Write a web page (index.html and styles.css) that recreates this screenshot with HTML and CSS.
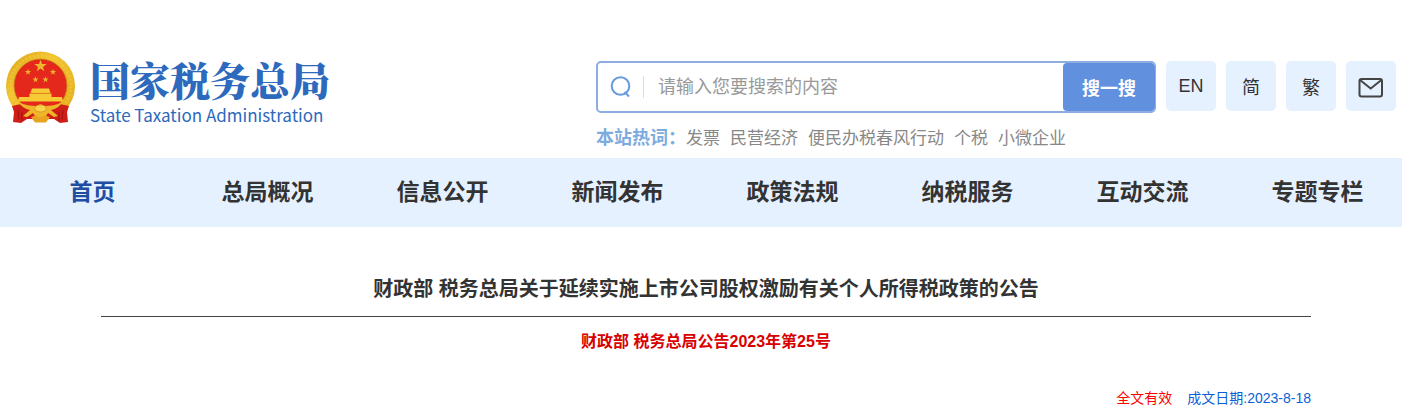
FILE: index.html
```html
<!DOCTYPE html>
<html lang="zh-CN">
<head>
<meta charset="utf-8">
<meta name="viewport" content="width=device-width, initial-scale=1">
<title>国家税务总局</title>
<link rel="stylesheet" href="styles.css">
</head>
<body>
<header class="header">
  <a class="brand" href="#">
    <svg class="emblem" viewBox="0 0 70 74" aria-hidden="true">
      <defs>
        <linearGradient id="gold" x1="0" y1="0" x2="1" y2="1">
          <stop offset="0" stop-color="#d9a01c"/>
          <stop offset=".35" stop-color="#f2c531"/>
          <stop offset="1" stop-color="#e3a91d"/>
        </linearGradient>
        <path id="star" d="M0-6.500 1.500-2 6.200-2 2.500.9 3.800 5.300 0 2.600-3.800 5.300-2.500.9-6.200-2-1.500-2Z"/>
      </defs>
      <circle cx="34.500" cy="35" r="34.500" fill="url(#gold)"/>
      <circle cx="34.500" cy="35" r="30.500" fill="none" stroke="#f8d64c" stroke-width="3" stroke-dasharray="2 2" opacity=".35"/>
      <circle cx="34.500" cy="34.500" r="26.500" fill="#e5281c" stroke="#c88a16" stroke-width=".7"/>
      <g fill="#efb62d">
        <use href="#star" transform="translate(34.500 15)"/>
        <use href="#star" transform="translate(22 21) scale(.5)"/>
        <use href="#star" transform="translate(47 21) scale(.5)"/>
        <use href="#star" transform="translate(29.500 28.500) scale(.5)"/>
        <use href="#star" transform="translate(39.500 28.500) scale(.5)"/>
      </g>
      <path d="M26 37.500h17l1.500 4.500h-20ZM23.500 42.500h22V46H56l1 4.500H12l1-4.500h10.500Z" fill="#f6ca35"/>
      <path d="M25 42.300h19" stroke="#db8f1d" stroke-width=".8"/>
      <path d="M6 55l9-2 12 6h15l12-6 9 2-2 6 1 10-8 1-6-4H21l-6 4-8-1 1-10Z" fill="#cf1d18"/>
      <path d="M12 59l1 10M16 61v9M57 59l-1 10M53 61v9" stroke="#a51211" stroke-width="1"/>
      <path d="M12 51c7 3 13 4 18 4l4.500-2 4.500 2c5 0 11-1 18-4-3 4-7 7-12 8l7 6-4 1-6-4c-2 4-5 5-7.500 5s-5.500-1-7.500-5l-6 4-4-1 7-6c-5-1-9-4-12-8Z" fill="#efb629"/>
      <ellipse cx="34.500" cy="57.500" rx="6" ry="3.500" fill="#f8d34b" stroke="#cf7d17" stroke-width=".6"/>
      <path d="M25 66l5-1.500q4.500 3 9 0l5 1.500-4 5.500h-11Z" fill="#e7a321"/>
    </svg>
    <span class="brand-text">
      <span class="brand-cn">国家税务总局</span>
      <span class="brand-en">State Taxation Administration</span>
    </span>
  </a>
  <div class="tools">
    <div class="tools-row">
      <form class="search" role="search">
        <svg class="search-icon" viewBox="0 0 22 22" aria-hidden="true">
          <circle cx="10.500" cy="10" r="8.800"/>
          <path d="M14.500 16l4.500 4.500"/>
        </svg>
        <input class="search-input" type="text" aria-label="搜索" placeholder="请输入您要搜索的内容">
        <button class="search-button" type="button">搜一搜</button>
      </form>
      <a class="tool" href="#">EN</a>
      <a class="tool" href="#">简</a>
      <a class="tool" href="#">繁</a>
      <a class="tool" href="#" aria-label="邮箱">
        <svg class="mail-icon" viewBox="0 0 26 20" aria-hidden="true">
          <rect x="1.500" y="1" width="22.500" height="17.500" rx="2"/>
          <path d="M2 2l10.700 8.500 10.700-8.500"/>
        </svg>
      </a>
    </div>
    <div class="hot">
      <strong class="hot-label">本站热词：</strong>
      <a href="#">发票</a>
      <a href="#">民营经济</a>
      <a href="#">便民办税春风行动</a>
      <a href="#">个税</a>
      <a href="#">小微企业</a>
    </div>
  </div>
</header>
<nav class="nav">
  <ul class="nav-list">
    <li><a class="active" href="#">首页</a></li>
    <li><a href="#">总局概况</a></li>
    <li><a href="#">信息公开</a></li>
    <li><a href="#">新闻发布</a></li>
    <li><a href="#">政策法规</a></li>
    <li><a href="#">纳税服务</a></li>
    <li><a href="#">互动交流</a></li>
    <li><a href="#">专题专栏</a></li>
  </ul>
</nav>
<main class="article">
  <h1 class="title">财政部 税务总局关于延续实施上市公司股权激励有关个人所得税政策的公告</h1>
  <p class="number">财政部 税务总局公告2023年第25号</p>
  <p class="meta"><span class="valid">全文有效</span><span>成文日期:2023-8-18</span></p>
</main>
</body>
</html>
```
FILE: styles.css
```css
* {
  box-sizing: border-box;
}

body {
  margin: 0;
  background: #fff;
  color: #333;
  font-family: "Liberation Sans", "Noto Sans CJK SC", sans-serif;
}

a {
  color: inherit;
  text-decoration: none;
}

.header {
  display: flex;
  justify-content: space-between;
  align-items: flex-start;
  padding: 51px 6px 7px;
}

.brand {
  display: flex;
  gap: 14px;
  color: #2d69bd;
}

.emblem {
  width: 70px;
  height: 74px;
}

.brand-text {
  display: flex;
  flex-direction: column;
  padding-top: 3px;
}

.brand-cn {
  font-family: "Noto Serif CJK SC", "Noto Sans CJK SC", serif;
  font-size: 40px;
  font-weight: 900;
  line-height: 50px;
}

.brand-en {
  font-family: "Noto Sans CJK SC", sans-serif;
  font-size: 17px;
  font-weight: 400;
  line-height: 22px;
}

.tools {
  flex: 0 1 800px;
  padding-top: 10px;
}

.tools-row {
  display: flex;
  gap: 10px;
}

.search {
  display: flex;
  flex: 1;
  align-items: center;
  height: 52px;
  padding-left: 12px;
  border: 2px solid #8dacdf;
  border-right-width: 1px;
  border-radius: 5px;
}

.search-icon {
  flex: none;
  width: 22px;
  height: 22px;
  fill: none;
  stroke: #659bdc;
  stroke-width: 2;
}

.search-input {
  flex: 1;
  min-width: 0;
  height: 22px;
  margin-left: 11px;
  padding: 0 0 0 14px;
  border: 0;
  border-left: 1px solid #ddd;
  outline: 0;
  font-family: inherit;
  font-size: 18px;
}

.search-input::placeholder {
  color: #999;
}

.search-button {
  flex: none;
  align-self: stretch;
  width: 92px;
  border: 0;
  border-radius: 4px;
  background: #6090de;
  color: #fff;
  font-family: inherit;
  font-size: 18px;
  font-weight: 700;
}

.tool {
  display: flex;
  justify-content: center;
  align-items: center;
  width: 50px;
  height: 50px;
  border-radius: 5px;
  background: #e6f1ff;
  font-size: 18px;
}

.mail-icon {
  width: 26px;
  height: 20px;
  margin-top: 4px;
  fill: none;
  stroke: #444;
  stroke-width: 2;
}

.hot {
  display: flex;
  gap: 10px;
  margin-top: 13px;
  color: #888;
  font-size: 17px;
  line-height: 25px;
}

.hot-label {
  margin-right: -10px;
  color: #7dabe0;
  font-size: 18px;
}

.nav {
  overflow: hidden;
  background: #e6f1ff;
}

.nav-list {
  display: grid;
  grid-template-columns: repeat(8, 1fr);
  margin: 0 -3px 0 5px;
  padding: 0;
  list-style: none;
  font-size: 23px;
  font-weight: 700;
  line-height: 69px;
  text-align: center;
}

.nav-list a {
  display: block;
}

.nav-list .active {
  color: #1f4da1;
}

.article {
  margin: 0 91px 0 101px;
  padding-top: 46px;
}

.title {
  margin: 0;
  padding-bottom: 11px;
  border-bottom: 1px solid #444;
  font-size: 20px;
  line-height: 32px;
  text-align: center;
}

.number {
  margin: 13px 0 0;
  color: #d90000;
  font-size: 16px;
  font-weight: 700;
  line-height: 24px;
  text-align: center;
}

.meta {
  display: flex;
  justify-content: flex-end;
  gap: 15px;
  margin: 34px 0 0;
  color: #0b5fd6;
  font-size: 14px;
  line-height: 20px;
}

.valid {
  color: #f00;
}
```
